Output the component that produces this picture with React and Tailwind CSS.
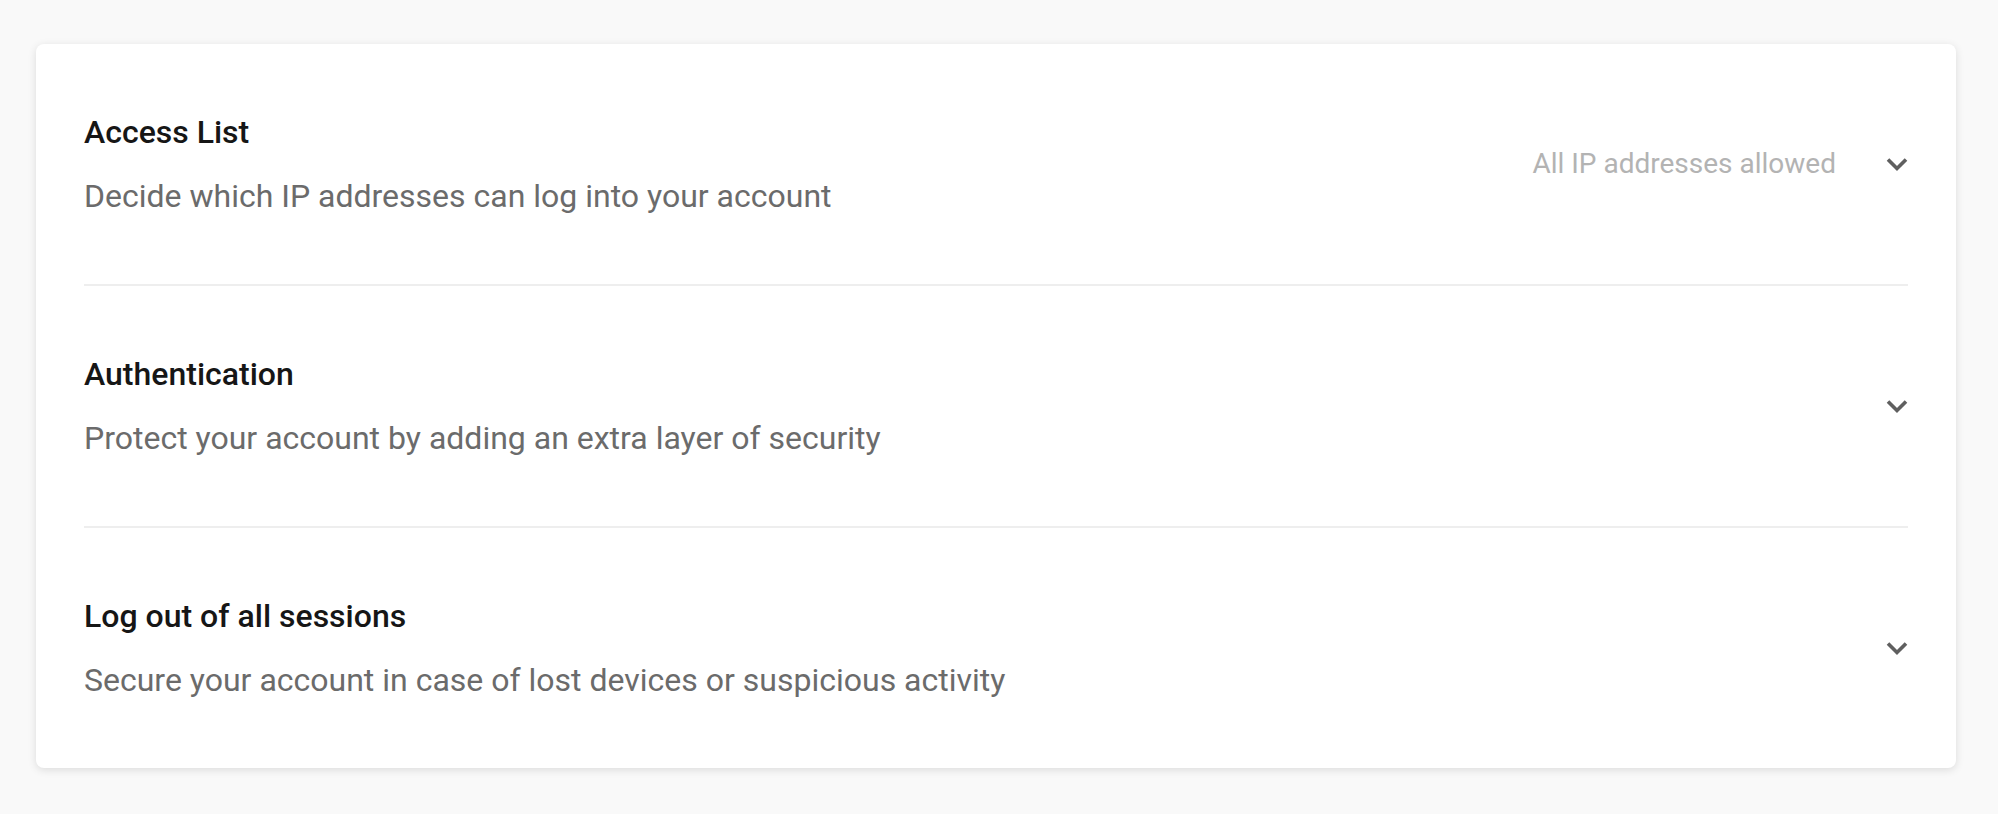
const rows = [
  {
    title: 'Access List',
    description: 'Decide which IP addresses can log into your account',
    status: 'All IP addresses allowed',
  },
  {
    title: 'Authentication',
    description: 'Protect your account by adding an extra layer of security',
  },
  {
    title: 'Log out of all sessions',
    description: 'Secure your account in case of lost devices or suspicious activity',
  },
];

function Chevron() {
  return (
    <svg width="22" height="15" viewBox="0 0 22 15" fill="none" className="shrink-0">
      <path d="M2 2.5 L11 11.5 L20 2.5" stroke="#5f5f5f" strokeWidth="3.6" />
    </svg>
  );
}

export default function App() {
  return (
    <div
      className="min-h-screen bg-[#f9f9f9] pl-[36px] pt-[44px] pb-[46px]"
      style={{ fontFamily: 'Roboto, "Noto Sans", sans-serif' }}
    >
      <div className="w-[1920px] rounded-lg bg-white px-[48px] shadow-[0_2px_8px_rgba(0,0,0,0.12)]">
        {rows.map((row, i) => (
          <div
            key={row.title}
            className={`flex items-center py-[68px] ${i < rows.length - 1 ? 'border-b-2 border-[#eeeeee]' : ''}`}
          >
            <div className="flex-1">
              <h3 className="text-[32px] leading-[40px] font-medium text-[#161616]">{row.title}</h3>
              <p className="mt-[24px] text-[32px] leading-[40px] text-[#6b6b6b]">{row.description}</p>
            </div>
            {row.status && (
              <span className="mr-[50px] text-[28px] leading-[40px] text-[#b3b3b3]">{row.status}</span>
            )}
            <Chevron />
          </div>
        ))}
      </div>
    </div>
  );
}
